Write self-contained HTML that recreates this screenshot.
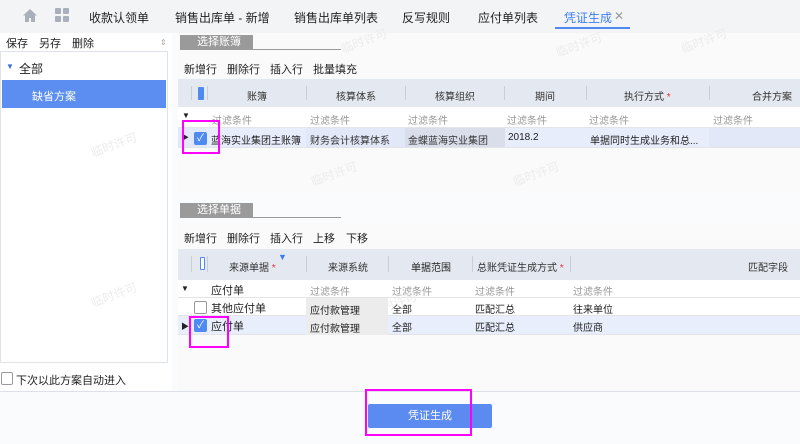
<!DOCTYPE html>
<html><head><meta charset="utf-8"><style>
*{margin:0;padding:0;box-sizing:border-box}
body{width:800px;height:444px;overflow:hidden;background:#fafbfd;font-family:"Liberation Sans","Noto Sans CJK SC",sans-serif;font-size:11px;color:#222;position:relative}
.a{position:absolute;white-space:nowrap}
.t{font-size:10px}
.top{left:0;top:0;width:800px;height:33px;background:#f3f4f6}
.tab{top:9px;font-size:12px;color:#222}
.hdr{background:#e4e8f0}
.vl{position:absolute;width:1px;background:#c9ced8}
.wm{color:#ececec;font-size:12px;transform:rotate(-20deg)}
.mag{position:absolute;border:2px solid #f0f}
.cb{position:absolute;width:13px;height:13px;border:1px solid #999;background:#fff;border-radius:2px}
.cbk{position:absolute;width:13px;height:13px;background:#4e8af0;border-radius:2px;color:#fff;font-size:10px;line-height:13px;text-align:center}
</style></head><body>
<div class="a top"></div>
<svg class="a" style="left:22px;top:8px" width="16" height="15" viewBox="0 0 16 15"><path d="M8 1L1 7.5h2V14h4V10h2v4h4V7.5h2z" fill="#a9b0bc"/></svg>
<svg class="a" style="left:55px;top:8px" width="15" height="15"><rect x="0" y="0" width="6" height="6" rx="1" fill="#a9b0bc"/><rect x="8" y="0" width="6" height="6" rx="1" fill="#a9b0bc"/><rect x="0" y="8" width="6" height="6" rx="1" fill="#a9b0bc"/><rect x="8" y="8" width="6" height="6" rx="1" fill="#a9b0bc"/></svg>
<div class="a tab" style="left:89px">收款认领单</div>
<div class="a tab" style="left:175px">销售出库单 - 新增</div>
<div class="a tab" style="left:294px">销售出库单列表</div>
<div class="a tab" style="left:402px">反写规则</div>
<div class="a tab" style="left:478px">应付单列表</div>
<div class="a tab" style="left:564px;color:#3d7ef0">凭证生成</div>
<div class="a" style="left:614px;top:9px;font-size:12px;color:#999">✕</div>
<div class="a" style="left:555px;top:27px;width:75px;height:2px;background:#4e8af0"></div>

<!-- left -->
<div class="a" style="left:0;top:33px;width:172px;height:358px;background:#fff"></div>
<div class="a" style="left:6px;top:35px">保存</div>
<div class="a" style="left:39px;top:35px">另存</div>
<div class="a" style="left:72px;top:35px">删除</div>
<div class="a" style="left:160px;top:38px;color:#aaa;font-size:8px">⇕</div>
<div class="a" style="left:0;top:51px;width:168px;height:312px;border:1px solid #e0e3e8;background:#fff"></div>
<div class="a" style="left:6px;top:62px;color:#3d6fe0;font-size:8px">▼</div>
<div class="a" style="left:19px;top:60px;font-size:12px">全部</div>
<div class="a" style="left:2px;top:80px;width:164px;height:28px;background:#5b8ef0"></div>
<div class="a" style="left:32px;top:88px;color:#fff">缺省方案</div>
<div class="a" style="left:1px;top:372px;width:12px;height:13px;border:1px solid #999;border-radius:2px;background:#fff"></div>
<div class="a" style="left:16px;top:372px">下次以此方案自动进入</div>

<!-- right section 1 -->
<div class="a" style="left:178px;top:33px;width:622px;height:158px;background:#fafafa"></div>
<div class="a" style="left:180px;top:35px;width:73px;height:15px;background:#9a9a9a;color:#fff;padding-left:17px;line-height:15px">选择账簿</div>
<div class="a" style="left:180px;top:49px;width:161px;height:1px;background:#999"></div>
<div class="a" style="left:184px;top:61px">新增行</div>
<div class="a" style="left:227px;top:61px">删除行</div>
<div class="a" style="left:270px;top:61px">插入行</div>
<div class="a" style="left:313px;top:61px">批量填充</div>
<div class="a hdr" style="left:178px;top:79px;width:622px;height:28px"></div>
<div class="a" style="left:178px;top:107px;width:622px;height:21px;background:#fff;border-bottom:1px solid #e2e4e8"></div>
<div class="a" style="left:178px;top:128px;width:622px;height:19px;background:#e2e8f8"></div>
<div class="a" style="left:178px;top:147px;width:622px;height:1px;background:#e2e4e8"></div>
<div class="vl" style="left:191px;top:86px;height:14px"></div>
<div class="a" style="left:198px;top:87px;width:6px;height:13px;background:#4e8af0;border-radius:1px"></div>
<div class="vl" style="left:207px;top:86px;height:14px"></div>
<div class="vl" style="left:306px;top:86px;height:14px"></div>
<div class="vl" style="left:405px;top:86px;height:14px"></div>
<div class="vl" style="left:504px;top:86px;height:14px"></div>
<div class="vl" style="left:586px;top:86px;height:14px"></div>
<div class="vl" style="left:709px;top:86px;height:14px"></div>
<div class="a t" style="left:247px;top:88px;color:#333">账簿</div>
<div class="a t" style="left:336px;top:88px;color:#333">核算体系</div>
<div class="a t" style="left:435px;top:88px;color:#333">核算组织</div>
<div class="a t" style="left:535px;top:88px;color:#333">期间</div>
<div class="a t" style="left:624px;top:88px;color:#333">执行方式 <span style="color:#e33">*</span></div>
<div class="a t" style="left:752px;top:88px;color:#333">合并方案</div>
<div class="a" style="left:182px;top:111px;font-size:8px">▼</div>
<div class="a t" style="left:212px;top:112px;color:#999">过滤条件</div>
<div class="a t" style="left:310px;top:112px;color:#999">过滤条件</div>
<div class="a t" style="left:408px;top:112px;color:#999">过滤条件</div>
<div class="a t" style="left:507px;top:112px;color:#999">过滤条件</div>
<div class="a t" style="left:589px;top:112px;color:#999">过滤条件</div>
<div class="a t" style="left:713px;top:112px;color:#999">过滤条件</div>
<div class="a" style="left:206px;top:128px;width:100px;height:19px;background:#e8edfb"></div>
<div class="a" style="left:405px;top:128px;width:100px;height:19px;background:#d9deea"></div>
<div class="a" style="left:505px;top:128px;width:81px;height:19px;background:#e8edfb"></div>
<div class="a" style="left:586px;top:128px;width:123px;height:19px;background:#e8edfb"></div>
<div class="a" style="left:181px;top:132px;font-size:8px">▶</div>
<div class="cbk" style="left:194px;top:132px">✓</div>
<div class="a t" style="left:211px;top:132px">蓝海实业集团主账簿</div>
<div class="a t" style="left:310px;top:132px;color:#333">财务会计核算体系</div>
<div class="a t" style="left:408px;top:132px;color:#333">金蝶蓝海实业集团</div>
<div class="a t" style="left:508px;top:132px">2018.2</div>
<div class="a t" style="left:590px;top:132px">单据同时生成业务和总...</div>
<div class="mag" style="left:182px;top:120px;width:38px;height:34px"></div>
<div class="a wm" style="left:340px;top:32px">临时许可</div>
<div class="a wm" style="left:680px;top:32px">临时许可</div>
<div class="a wm" style="left:555px;top:36px">临时许可</div>
<div class="a wm" style="left:310px;top:165px">临时许可</div>
<div class="a wm" style="left:512px;top:165px">临时许可</div>

<!-- section 2 -->
<div class="a" style="left:180px;top:203px;width:73px;height:15px;background:#9a9a9a;color:#fff;padding-left:17px;line-height:15px">选择单据</div>
<div class="a" style="left:180px;top:217px;width:161px;height:1px;background:#999"></div>
<div class="a" style="left:178px;top:223px;width:622px;height:168px;background:#fafafa"></div>
<div class="a" style="left:184px;top:230px">新增行</div>
<div class="a" style="left:227px;top:230px">删除行</div>
<div class="a" style="left:270px;top:230px">插入行</div>
<div class="a" style="left:313px;top:230px">上移</div>
<div class="a" style="left:346px;top:230px">下移</div>
<div class="a hdr" style="left:178px;top:249px;width:622px;height:31px"></div>
<div class="a" style="left:178px;top:280px;width:622px;height:18px;background:#fff;border-bottom:1px solid #e2e4e8"></div>
<div class="a" style="left:178px;top:298px;width:622px;height:18px;background:#fff;border-bottom:1px solid #e2e4e8"></div>
<div class="a" style="left:178px;top:316px;width:622px;height:19px;background:#e8eefc;border-bottom:1px solid #e2e4e8"></div>
<div class="a" style="left:306px;top:298px;width:82px;height:37px;background:#ececec"></div>
<div class="vl" style="left:191px;top:256px;height:16px"></div>
<div class="a" style="left:200px;top:257px;width:5px;height:13px;border:1px solid #4e8af0;border-radius:1px;background:#fff"></div>
<div class="vl" style="left:207px;top:256px;height:16px"></div>
<div class="vl" style="left:306px;top:256px;height:16px"></div>
<div class="vl" style="left:388px;top:256px;height:16px"></div>
<div class="vl" style="left:472px;top:256px;height:16px"></div>
<div class="vl" style="left:570px;top:256px;height:16px"></div>
<div class="a t" style="left:229px;top:259px;color:#333">来源单据 <span style="color:#e33">*</span></div>
<div class="a" style="left:278px;top:252px;color:#3d7ef0;font-size:9px">▼</div>
<div class="a t" style="left:328px;top:259px;color:#333">来源系统</div>
<div class="a t" style="left:411px;top:259px;color:#222">单据范围</div>
<div class="a t" style="left:477px;top:259px;color:#333">总账凭证生成方式 <span style="color:#e33">*</span></div>
<div class="a t" style="left:748px;top:259px;color:#333">匹配字段</div>
<div class="a" style="left:181px;top:284px;font-size:8px">▼</div>
<div class="a" style="left:211px;top:282px">应付单</div>
<div class="a t" style="left:310px;top:283px;color:#999">过滤条件</div>
<div class="a t" style="left:392px;top:283px;color:#999">过滤条件</div>
<div class="a t" style="left:475px;top:283px;color:#999">过滤条件</div>
<div class="a t" style="left:573px;top:283px;color:#999">过滤条件</div>
<div class="cb" style="left:194px;top:301px"></div>
<div class="a" style="left:211px;top:300px">其他应付单</div>
<div class="a t" style="left:310px;top:302px">应付款管理</div>
<div class="a t" style="left:392px;top:301px">全部</div>
<div class="a t" style="left:475px;top:301px">匹配汇总</div>
<div class="a t" style="left:573px;top:301px">往来单位</div>
<div class="a" style="left:181px;top:321px;font-size:8px">▶</div>
<div class="cbk" style="left:194px;top:319px">✓</div>
<div class="a" style="left:211px;top:318px">应付单</div>
<div class="a t" style="left:310px;top:320px">应付款管理</div>
<div class="a t" style="left:392px;top:319px">全部</div>
<div class="a t" style="left:475px;top:319px">匹配汇总</div>
<div class="a t" style="left:573px;top:319px">供应商</div>
<div class="mag" style="left:189px;top:316px;width:40px;height:32px"></div>
<div class="a wm" style="left:370px;top:295px">临时许可</div>
<div class="a wm" style="left:90px;top:286px">临时许可</div>
<div class="a wm" style="left:90px;top:136px">临时许可</div>

<!-- footer -->
<div class="a" style="left:0;top:391px;width:800px;height:1px;background:#dde0e5"></div>
<div class="a" style="left:0;top:392px;width:800px;height:52px;background:#fafbfd"></div>
<div class="a" style="left:368px;top:404px;width:124px;height:24px;background:#5b8af0;border-radius:2px;color:#fff;text-align:center;line-height:24px">凭证生成</div>
<div class="mag" style="left:365px;top:389px;width:107px;height:47px"></div>
</body></html>
